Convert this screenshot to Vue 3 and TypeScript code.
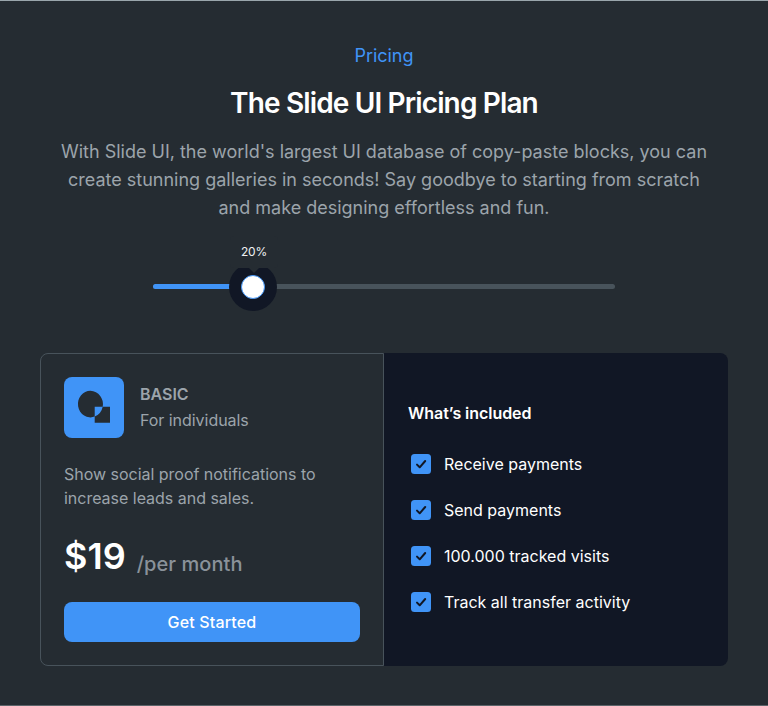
<script setup lang="ts">
import { ref } from 'vue'

const discount = ref<number>(20)
const features: string[] = [
  'Receive payments',
  'Send payments',
  '100.000 tracked visits',
  'Track all transfer activity',
]
</script>

<template>
  <main class="page">
    <header class="intro">
      <p class="eyebrow">Pricing</p>
      <h1 class="title">The Slide UI Pricing Plan</h1>
      <p class="lead">
        With Slide UI, the world's largest UI database of copy-paste blocks, you can<br />
        create stunning galleries in seconds! Say goodbye to starting from scratch<br />
        and make designing effortless and fun.
      </p>
    </header>

    <div class="slider">
      <div class="fill"></div>
      <div class="thumb">
        <span class="knob"></span>
        <span class="tip">{{ discount }}%</span>
      </div>
    </div>

    <section class="card">
      <div class="plan">
        <div class="plan-head">
          <svg class="logo" viewBox="0 0 60 61" aria-hidden="true">
            <rect width="60" height="61" rx="8" fill="#4094f7" />
            <path
              fill="#252c32"
              fill-rule="evenodd"
              d="M26.5 13.8a12.5 13.3 0 1 0 4.2 25.8V45.8H46V29.8H38.7A13 13.3 0 0 0 26.5 13.8ZM30.7 29.8H38.7A13.3 13.3 0 0 1 30.7 39.6Z"
            />
          </svg>
          <div class="plan-text">
            <h2 class="plan-name">BASIC</h2>
            <p class="plan-for">For individuals</p>
          </div>
        </div>
        <p class="desc">Show social proof notifications to<br />increase leads and sales.</p>
        <p class="price"><strong class="amount">$19</strong><span class="per">/per month</span></p>
        <button class="cta" type="button">Get Started</button>
      </div>
      <div class="included">
        <h3 class="inc-title">What’s included</h3>
        <ul class="list">
          <li v-for="f in features" :key="f" class="item">
            <svg class="check" viewBox="0 0 20 20" aria-hidden="true">
              <rect width="20" height="20" rx="3.5" fill="#4094f7" />
              <path d="M6 10.6 8.7 13.3 14.2 7" fill="none" stroke="#111725" stroke-width="2" stroke-linecap="round" stroke-linejoin="round" />
            </svg>
            <span>{{ f }}</span>
          </li>
        </ul>
      </div>
    </section>
  </main>
</template>

<style>
body {
  background: #252c32;
}
</style>

<style scoped>
.page {
  box-sizing: border-box;
  height: 706px;
  padding: 41px 40px 0;
  overflow: hidden;
  background: #252c32;
  border-top: 1px solid #9aa6ac;
  border-bottom: 1px solid #5b6369;
  font-family: Inter, 'Liberation Sans', sans-serif;
  color: #fff;
}
h1, h2, h3, p, ul {
  margin: 0;
  padding: 0;
}
.intro {
  text-align: center;
}
.eyebrow {
  font-size: 18px;
  line-height: 28px;
  letter-spacing: -0.05px;
  color: #4094f7;
}
.title {
  margin-top: 13px;
  font-size: 28px;
  font-weight: 600;
  line-height: 40px;
  letter-spacing: -0.86px;
}
.lead {
  margin-top: 15px;
  font-size: 18px;
  line-height: 28px;
  color: #9ca4ab;
  white-space: nowrap;
}
.slider {
  position: relative;
  width: 462px;
  height: 5px;
  margin: 62px auto 0;
  border-radius: 3px;
  background: #48535b;
}
.fill {
  width: 100px;
  height: 5px;
  border-radius: 3px;
  background: #4094f7;
}
.thumb {
  position: absolute;
  left: 76px;
  top: -21.5px;
  display: grid;
  place-items: center;
  width: 48px;
  height: 48px;
  border-radius: 50%;
  background: #111725;
}
.knob {
  box-sizing: border-box;
  width: 24px;
  height: 24px;
  border: 1px solid #4094f7;
  border-radius: 50%;
  background: #fff;
}
.tip {
  position: absolute;
  left: 1px;
  top: -27px;
  width: 48px;
  height: 32px;
  border-radius: 4px;
  background: #252c32;
  font-size: 12px;
  line-height: 32px;
  letter-spacing: -0.2px;
  text-align: center;
  color: #eef0f2;
}
.tip::after {
  content: '';
  position: absolute;
  left: 19px;
  top: 32px;
  border: 5px solid transparent;
  border-top-color: #252c32;
  border-bottom: 0;
}
.card {
  display: grid;
  grid-template-columns: 1fr 1fr;
  height: 313px;
  margin-top: 64px;
}
.plan {
  box-sizing: border-box;
  padding: 23px;
  border: 1px solid #48535b;
  border-radius: 8px 0 0 8px;
}
.plan-head {
  display: flex;
  align-items: flex-start;
  gap: 16px;
}
.logo {
  flex: none;
  width: 60px;
  height: 61px;
}
.plan-text {
  padding-top: 5px;
}
.plan-name {
  font-size: 16px;
  font-weight: 600;
  line-height: 24px;
  color: #9ca4ab;
}
.plan-for {
  margin-top: 2px;
  font-size: 16px;
  line-height: 24px;
  letter-spacing: -0.04px;
  color: #9ca4ab;
}
.desc {
  margin-top: 24px;
  font-size: 16px;
  line-height: 24px;
  letter-spacing: -0.02px;
  color: #9ca4ab;
}
.price {
  display: flex;
  align-items: flex-start;
  gap: 11px;
  height: 56px;
  margin-top: 18px;
}
.amount {
  font-size: 36px;
  font-weight: 600;
  line-height: 56px;
}
.per {
  padding-top: 22px;
  font-size: 20px;
  font-weight: 500;
  line-height: 28px;
  letter-spacing: 0.05px;
  color: #8a929a;
}
.cta {
  display: block;
  width: 100%;
  height: 40px;
  margin-top: 18px;
  padding: 0;
  border: 0;
  border-radius: 8px;
  background: #4094f7;
  font: 500 16px/40px Inter, sans-serif;
  letter-spacing: 0.16px;
  color: #fff;
}
.included {
  padding: 48px 24px 0;
  border-radius: 0 8px 8px 0;
  background: #111725;
}
.inc-title {
  font-size: 16px;
  font-weight: 600;
  line-height: 24px;
  letter-spacing: -0.05px;
}
.list {
  display: grid;
  gap: 22px;
  margin-top: 27px;
  list-style: none;
}
.item {
  display: flex;
  align-items: center;
  gap: 13px;
  padding-left: 3px;
  font-size: 16px;
  line-height: 24px;
}
.check {
  flex: none;
  width: 20px;
  height: 20px;
}
</style>
